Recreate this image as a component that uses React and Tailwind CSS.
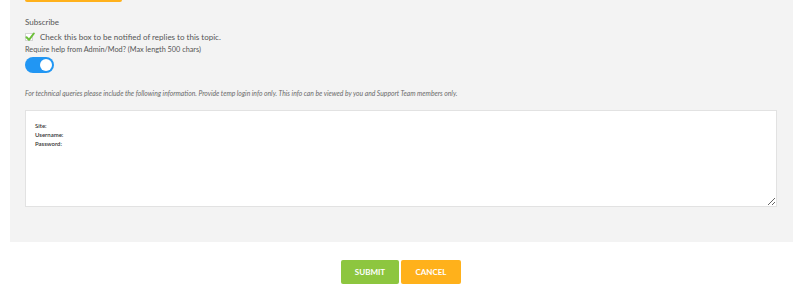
import { useState } from 'react';

const App = () => {
  const [subscribed, setSubscribed] = useState(true);
  const [needHelp, setNeedHelp] = useState(true);

  return (
    <div className="w-[800px] h-[290px] bg-white font-['Lato','Liberation_Sans',sans-serif] text-[#555]">
      <div className="ml-[10px] mr-[7px] bg-[#f3f3f3] pl-[15px] pr-[16px] pb-[35px]">
        {/* bottom of the button above, cut off by the viewport */}
        <div className="w-[97px] h-[2px] rounded-b-[2px] bg-[#ffb11b]" />

        <div className="mt-[15px] text-[8px] leading-[10px]">Subscribe</div>

        <label className="mt-[5px] flex items-center gap-[7px] text-[8px] leading-[10px] cursor-pointer">
          <span
            onClick={() => setSubscribed(!subscribed)}
            className="relative w-[8px] h-[8px] border border-[#d5d5d5] bg-white"
          >
            {subscribed && (
              <svg viewBox="0 0 10 10" className="absolute left-[-1px] top-[-2px] w-[10px] h-[10px]">
                <path d="M1.5 5.2 L4 7.8 L8.8 1.5" fill="none" stroke="#6cbf3a" strokeWidth="2" strokeLinecap="round" strokeLinejoin="round" />
              </svg>
            )}
          </span>
          Check this box to be notified of replies to this topic.
        </label>

        <div className="mt-[3px] text-[7.3px] leading-[10px]">Require help from Admin/Mod? (Max length 500 chars)</div>

        <button
          onClick={() => setNeedHelp(!needHelp)}
          className={`mt-[2px] flex items-center w-[29px] h-[16px] rounded-full px-[2px] ${needHelp ? 'bg-[#2196f3] justify-end' : 'bg-[#ccc] justify-start'}`}
        >
          <span className="w-[12px] h-[12px] rounded-full bg-white" />
        </button>

        <p className="mt-[16px] text-[6.75px] leading-[9px] italic text-[#6a6a6a]">
          For technical queries please include the following information. Provide temp login info only. This info can be viewed by you and Support Team members only.
        </p>

        <textarea
          defaultValue={'Site:\nUsername:\nPassword:'}
          className="mt-[12px] block w-full h-[97px] bg-white border border-[#e2e2e2] px-[9px] pt-[10px] text-[6px] leading-[9px] font-semibold text-[#333] outline-none"
        />
      </div>

      <div className="mt-[18px] flex justify-center gap-[2px] pl-[2px]">
        <button className="w-[58px] h-[24px] rounded-[2px] bg-[#8dc63f] text-white text-[8px] font-bold">SUBMIT</button>
        <button className="w-[60px] h-[24px] rounded-[2px] bg-[#ffb11b] text-white text-[8px] font-bold">CANCEL</button>
      </div>
    </div>
  );
};

export default App;
